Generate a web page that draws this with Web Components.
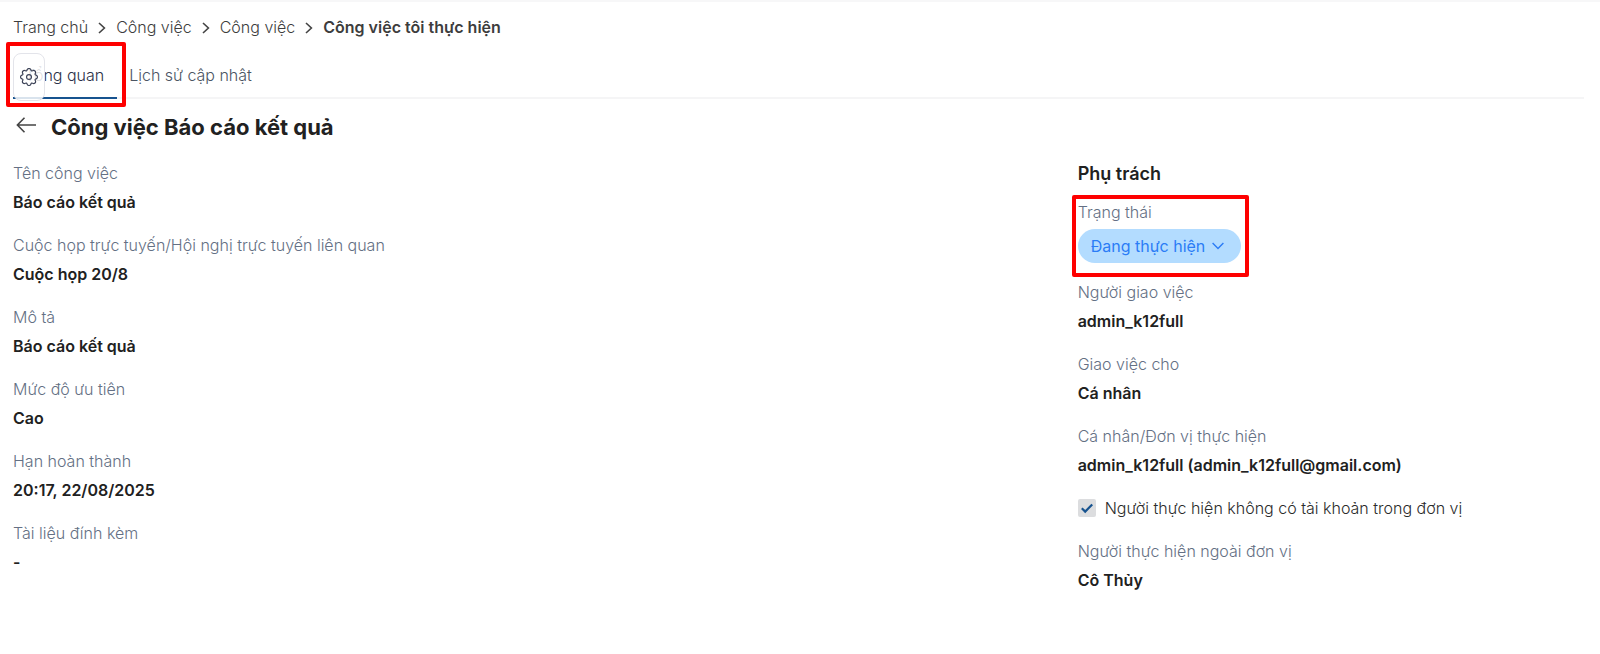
<!DOCTYPE html>
<html lang="vi">
<head>
<meta charset="utf-8">
<title>Công việc Báo cáo kết quả</title>
<style>
  body {
    margin: 0;
    background: #fff;
    color: #212529;
    font: 300 16px/24px Inter, "Noto Sans", sans-serif;
  }
</style>
</head>
<body>

<task-page>
  <bread-crumb slot="nav">
    <crumb-link>Trang chủ</crumb-link>
    <crumb-link>Công việc</crumb-link>
    <crumb-link>Công việc</crumb-link>
    <crumb-link current>Công việc tôi thực hiện</crumb-link>
  </bread-crumb>

  <tab-bar slot="nav">
    <mark-box class="tab">
      <tab-item active>Tổng quan</tab-item>
      <gear-button></gear-button>
    </mark-box>
    <tab-item>Lịch sử cập nhật</tab-item>
  </tab-bar>

  <page-title slot="nav">Công việc Báo cáo kết quả</page-title>

  <info-field slot="main" label="Tên công việc">Báo cáo kết quả</info-field>
  <info-field slot="main" label="Cuộc họp trực tuyến/Hội nghị trực tuyến liên quan">Cuộc họp 20/8</info-field>
  <info-field slot="main" label="Mô tả">Báo cáo kết quả</info-field>
  <info-field slot="main" label="Mức độ ưu tiên">Cao</info-field>
  <info-field slot="main" label="Hạn hoàn thành">20:17, 22/08/2025</info-field>
  <info-field slot="main" label="Tài liệu đính kèm">-</info-field>

  <side-title slot="side">Phụ trách</side-title>
  <mark-box slot="side" class="status">
    <status-select label="Trạng thái" value="Đang thực hiện"></status-select>
  </mark-box>
  <info-field slot="side" label="Người giao việc">admin_k12full</info-field>
  <info-field slot="side" label="Giao việc cho">Cá nhân</info-field>
  <info-field slot="side" label="Cá nhân/Đơn vị thực hiện">admin_k12full (admin_k12full@gmail.com)</info-field>
  <check-field slot="side">Người thực hiện không có tài khoản trong đơn vị</check-field>
  <info-field slot="side" label="Người thực hiện ngoài đơn vị">Cô Thủy</info-field>
</task-page>

<script>
  // Base: renders the template of the class in an open shadow root
  class BaseElement extends HTMLElement {
    connectedCallback() {
      if (this.shadowRoot) return;
      const root = this.attachShadow({ mode: 'open' });
      root.innerHTML = `<style>*{box-sizing:border-box}${this.css()}</style>${this.html()}`;
    }
    attr(name) {
      return this.getAttribute(name) || '';
    }
    css() { return ''; }
    html() { return '<slot></slot>'; }
  }

  class TaskPage extends BaseElement {
    css() {
      return `
        :host { display: block; border-top: 2px solid #f7f7f8; padding: 13px 16px 48px 13px; }
        main { display: grid; grid-template-columns: 2fr 1fr; gap: 52px; margin-top: 18px; }
        section { display: flex; flex-direction: column; gap: 19px; min-width: 0; }
      `;
    }
    html() {
      return `
        <header><slot name="nav"></slot></header>
        <main>
          <section><slot name="main"></slot></section>
          <section><slot name="side"></slot></section>
        </main>
      `;
    }
  }

  class BreadCrumb extends BaseElement {
    css() { return `nav { display: flex; gap: 9px; } :host { display: block; }`; }
    html() { return `<nav aria-label="Breadcrumb"><slot></slot></nav>`; }
  }

  class CrumbLink extends BaseElement {
    css() {
      return `
        :host { display: flex; align-items: center; gap: 9px; }
        :host([current]) a { font-weight: 600; color: #3d3d3d; }
        :host([current]) svg { display: none; }
        a { color: #3d3d3d; text-decoration: none; }
        svg { width: 10px; height: 12px; margin-top: 2px; }
      `;
    }
    html() {
      return `
        <a href="#"><slot></slot></a>
        <svg viewBox="0 0 10 12" fill="none" stroke="#444" stroke-width="1.6"><path d="M2 1l5.4 5L2 11"/></svg>
      `;
    }
  }

  class TabBar extends BaseElement {
    css() {
      return `
        :host { display: flex; margin-top: 14px; border-bottom: 2px solid #f5f5f6; }
      `;
    }
  }

  class TabItem extends BaseElement {
    css() {
      return `
        :host { display: block; margin-bottom: -2px; }
        button {
          display: block; height: 46px; padding: 0 13px 0 12px; border: 0;
          border-bottom: 2px solid transparent; background: none;
          font: inherit; color: #4b5563; cursor: pointer;
        }
        :host([active]) button { color: #2c3148; border-color: #17538f; }
      `;
    }
    html() { return `<button type="button" role="tab"><slot></slot></button>`; }
  }

  // Floating settings handle, lies over the first tab
  class GearButton extends BaseElement {
    css() {
      return `
        :host { position: absolute; left: 0; top: 0; }
        button {
          display: grid; place-items: center; width: 32px; height: 48px; padding: 0;
          border: 1px solid #e3e4ea; border-radius: 8px;
          background: rgba(255, 255, 255, .84); cursor: pointer;
        }
        svg { width: 18px; height: 18px; }
      `;
    }
    html() {
      // 8 round teeth around the hub
      return `
        <button type="button" aria-label="Cài đặt">
          <svg viewBox="-.5 -.5 17 17" fill="none" stroke="#3c4257" stroke-width="1.1">
            <path d="M9.796 1.343c-.527-1.79-3.065-1.79-3.592 0l-.094.319a.873.873 0 0 1-1.255.52l-.292-.16c-1.64-.892-3.433.902-2.54 2.541l.159.292a.873.873 0 0 1-.52 1.255l-.319.094c-1.79.527-1.79 3.065 0 3.592l.319.094a.873.873 0 0 1 .52 1.255l-.16.292c-.892 1.64.901 3.434 2.541 2.54l.292-.159a.873.873 0 0 1 1.255.52l.094.319c.527 1.79 3.065 1.79 3.592 0l.094-.319a.873.873 0 0 1 1.255-.52l.292.16c1.64.893 3.434-.902 2.54-2.541l-.159-.292a.873.873 0 0 1 .52-1.255l.319-.094c1.79-.527 1.79-3.065 0-3.592l-.319-.094a.873.873 0 0 1-.52-1.255l.16-.292c.893-1.64-.902-3.433-2.541-2.54l-.292.159a.873.873 0 0 1-1.255-.52z"/>
            <circle cx="8" cy="8" r="2.3"/>
          </svg>
        </button>
      `;
    }
  }

  // Red frame around the slotted content
  class MarkBox extends BaseElement {
    css() {
      return `
        :host { display: block; position: relative; }
        :host::after {
          content: ""; position: absolute; border: 4px solid #fe0000;
          border-radius: 2px; pointer-events: none;
        }
        :host(.tab)::after { inset: -11px -9px -10px -7px; }
        :host(.status) { align-self: flex-start; margin: -6px 0 -8px; padding-bottom: 6px; }
        :host(.status)::after { inset: -5px -8px -8px -6px; }
      `;
    }
  }

  class PageTitle extends BaseElement {
    css() {
      return `
        :host { display: flex; align-items: center; gap: 15px; margin-top: 12px; padding-left: 3px; }
        a { display: flex; padding-bottom: 4px; }
        svg { width: 20px; height: 16px; }
        h1 { margin: 0; font-size: 22px; line-height: 32px; font-weight: 700; color: #212121; }
      `;
    }
    html() {
      return `
        <a href="#" aria-label="Quay lại">
          <svg viewBox="0 0 20 16" fill="none" stroke="#444" stroke-width="1.6"><path d="M8.5 .8L1.4 8l7.1 7.2M1.4 8H20"/></svg>
        </a>
        <h1><slot></slot></h1>
      `;
    }
  }

  class SideTitle extends BaseElement {
    css() {
      return `
        :host { display: block; }
        h2 { margin: 0; font-size: 18px; line-height: 26px; font-weight: 600; color: #212121; }
      `;
    }
    html() { return `<h2><slot></slot></h2>`; }
  }

  class InfoField extends BaseElement {
    css() {
      return `
        :host { display: block; }
        dl { display: grid; gap: 5px; margin: 0; }
        dt { color: #647084; }
        dd { margin: 0; font-weight: 600; color: #212121; }
      `;
    }
    html() {
      return `<dl><dt>${this.attr('label')}</dt><dd><slot></slot></dd></dl>`;
    }
  }

  class StatusSelect extends BaseElement {
    css() {
      return `
        :host { display: grid; gap: 5px; }
        label { color: #647084; }
        .pill { display: grid; align-items: center; }
        .pill > * { grid-area: 1 / 1; }
        select {
          appearance: none; height: 34px; padding: 0 35px 0 13px; border: 0;
          border-radius: 17px; background: #b3dcff; color: #2b7cf6; font: inherit; font-weight: 400;
        }
        svg { justify-self: end; width: 12px; height: 8px; margin-right: 17px; pointer-events: none; }
      `;
    }
    html() {
      return `
        <label for="status">${this.attr('label')}</label>
        <div class="pill">
          <select id="status"><option>${this.attr('value')}</option></select>
          <svg viewBox="0 0 12 8" fill="none" stroke="#2b7cf6" stroke-width="1.4"><path d="M.6 1L6 6.6 11.4 1"/></svg>
        </div>
      `;
    }
  }

  class CheckField extends BaseElement {
    css() {
      return `
        :host { display: block; }
        label { display: flex; align-items: center; gap: 9px; color: #2b2b2b; }
        .box { display: grid; }
        .box > * { grid-area: 1 / 1; width: 18px; height: 18px; }
        input { appearance: none; margin: 0; border-radius: 2px; background: #dcdddf; }
        svg { pointer-events: none; }
        input:not(:checked) + svg { visibility: hidden; }
      `;
    }
    html() {
      return `
        <label>
          <span class="box">
            <input type="checkbox" checked>
            <svg viewBox="0 0 18 18" fill="none" stroke="#17538f" stroke-width="2.2"><path d="M3.8 9.2l3.4 3.4 7-7.2"/></svg>
          </span>
          <span><slot></slot></span>
        </label>
      `;
    }
  }

  customElements.define('task-page', TaskPage);
  customElements.define('bread-crumb', BreadCrumb);
  customElements.define('crumb-link', CrumbLink);
  customElements.define('tab-bar', TabBar);
  customElements.define('tab-item', TabItem);
  customElements.define('gear-button', GearButton);
  customElements.define('mark-box', MarkBox);
  customElements.define('page-title', PageTitle);
  customElements.define('side-title', SideTitle);
  customElements.define('info-field', InfoField);
  customElements.define('status-select', StatusSelect);
  customElements.define('check-field', CheckField);
</script>
</body>
</html>
